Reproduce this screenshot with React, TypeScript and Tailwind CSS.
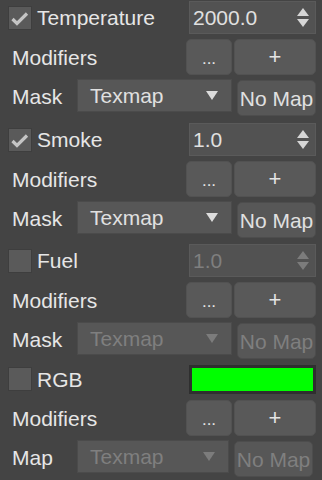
import React from "react";

const font = { fontFamily: '"Liberation Sans", Arial, sans-serif' };

function Check({ checked }: { checked: boolean }) {
  return (
    <div className="w-[24px] h-[24px] shrink-0 bg-[#5a5a5a] border border-[#3e3e3e] flex items-center justify-center">
      {checked && (
        <svg width="22" height="22" viewBox="0 0 22 22">
          <polyline points="3.5,12 8,16.5 18,6.5" fill="none" stroke="#c4c4c4" strokeWidth="3.2" strokeLinejoin="miter" />
        </svg>
      )}
    </div>
  );
}

function Spinner({ value, disabled }: { value: string; disabled?: boolean }) {
  const c = disabled ? "#7c7c7c" : "#d6d6d6";
  return (
    <div className="w-[127px] h-[33px] bg-[#525252] border border-[#5a5a5a] flex items-center pl-[3px] pr-[6px]">
      <span className={"text-[21px] leading-none flex-1 " + (disabled ? "text-[#7f7f7f]" : "text-[#e0e0e0]")}>{value}</span>
      <svg width="12" height="20" viewBox="0 0 12 20">
        <polygon points="6,0 12,8 0,8" fill={c} />
        <polygon points="0,11 12,11 6,19" fill={c} />
      </svg>
    </div>
  );
}

function Buttons() {
  return (
    <div className="flex gap-[2px]">
      <div className="w-[46px] h-[36px] rounded-[5px] bg-[#595959] border border-[#525252] flex items-end justify-center pb-[7px] text-[#e4e4e4] text-[17px] leading-none">...</div>
      <div className="w-[82px] h-[36px] rounded-[5px] bg-[#595959] border border-[#525252] flex items-center justify-center text-[#e4e4e4] text-[22px] leading-none font-light">+</div>
    </div>
  );
}

function MapRow({ label, disabled, last }: { label: string; disabled?: boolean; last?: boolean }) {
  const txt = disabled ? "text-[#7f7f7f]" : "text-[#e0e0e0]";
  const arrow = disabled ? "#7c7c7c" : "#dcdcdc";
  return (
    <div className="flex items-start h-[37px]">
      <span className="pl-[12px] w-[77px] h-[34px] flex items-center text-[21px] text-[#e6e6e6] leading-none">{label}</span>
      <div className={(last ? "w-[152px]" : "w-[155px]") + " h-[33px] bg-[#575757] border border-[#4b4b4b] flex items-center pl-[12px] pr-[13px]"}>
        <span className={"flex-1 text-[21px] leading-none " + txt}>Texmap</span>
        <svg width="12" height="10" viewBox="0 0 12 10">
          <polygon points="0,0 12,0 6,9" fill={arrow} />
        </svg>
      </div>
      <div className="ml-[5px] w-[79px] mt-[1px] h-[36px] rounded-[5px] bg-[#575757] border border-[#4d4d4d] flex items-center justify-center text-[21px] leading-none whitespace-nowrap">
        <span className={txt}>No Map</span>
      </div>
    </div>
  );
}

function Section({ name, checked, value, disabled, swatch, mapLabel, last }: { name: string; checked: boolean; value?: string; disabled?: boolean; swatch?: boolean; mapLabel: string; last?: boolean }) {
  return (
    <div className="flex flex-col">
      <div className={"flex items-center " + (swatch ? "h-[30px]" : "h-[33px]")}>
        <div className="pl-[8px] flex items-center gap-[5px] flex-1">
          <Check checked={checked} />
          <span className="text-[21px] text-[#e6e6e6] leading-none">{name}</span>
        </div>
        <div className="mr-[6px]">
          {swatch ? (
            <div className="w-[127px] h-[29px] bg-[#00ff00] border-[3px] border-[#2f2f2f]" />
          ) : (
            <Spinner value={value || ""} disabled={disabled} />
          )}
        </div>
      </div>
      <div className={"flex items-center h-[36px] " + (swatch ? "mt-[6px]" : "mt-[5px]")}>
        <span className="pl-[12px] flex-1 text-[21px] text-[#e6e6e6] leading-none">Modifiers</span>
        <div className="mr-[6px]"><Buttons /></div>
      </div>
      <div className="mt-[4px]">
        <MapRow label={mapLabel} disabled={!checked} last={last} />
      </div>
    </div>
  );
}

export default function App() {
  return (
    <div className="w-[322px] h-[480px] bg-[#444444] overflow-hidden pt-[1px] flex flex-col" style={font}>
      <Section name="Temperature" checked value="2000.0" mapLabel="Mask" />
      <div className="mt-[7px]"><Section name="Smoke" checked value="1.0" mapLabel="Mask" /></div>
      <div className="mt-[6px]"><Section name="Fuel" checked={false} value="1.0" disabled mapLabel="Mask" /></div>
      <div className="mt-[5px]"><Section name="RGB" checked={false} swatch mapLabel="Map" last /></div>
    </div>
  );
}
